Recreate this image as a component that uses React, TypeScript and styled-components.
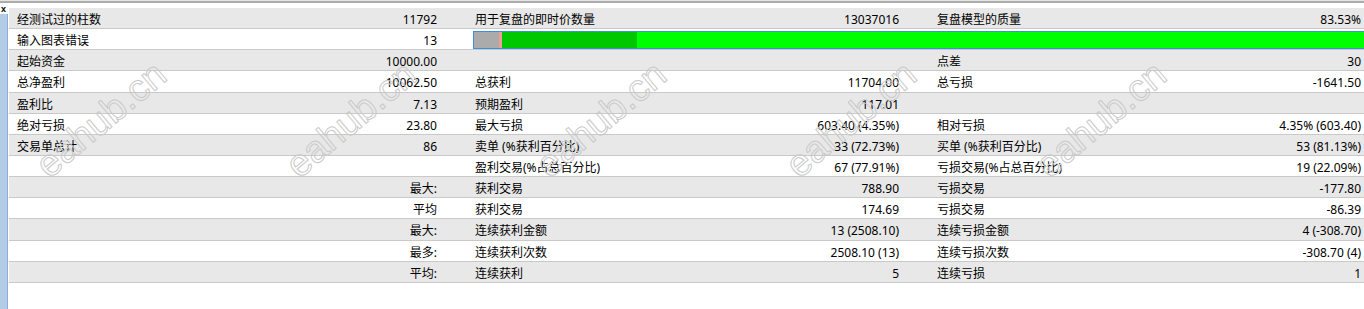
import styled, { createGlobalStyle } from "styled-components";

const GlobalStyle = createGlobalStyle`
  html, body {
    margin: 0;
    padding: 0;
    background: #ffffff;
    overflow: hidden;
  }
  body {
    font-family: "Noto Sans", "Noto Sans CJK SC", sans-serif;
    color: #000000;
  }
`;

type Row = {
  cells: string[];
  bar?: boolean;
};

const rows: Row[] = [
  { cells: ["经测试过的柱数", "11792", "用于复盘的即时价数量", "13037016", "复盘模型的质量", "83.53%"] },
  { cells: ["输入图表错误", "13"], bar: true },
  { cells: ["起始资金", "10000.00", "", "", "点差", "30"] },
  { cells: ["总净盈利", "10062.50", "总获利", "11704.00", "总亏损", "-1641.50"] },
  { cells: ["盈利比", "7.13", "预期盈利", "117.01", "", ""] },
  { cells: ["绝对亏损", "23.80", "最大亏损", "603.40 (4.35%)", "相对亏损", "4.35% (603.40)"] },
  { cells: ["交易单总计", "86", "卖单 (%获利百分比)", "33 (72.73%)", "买单 (%获利百分比)", "53 (81.13%)"] },
  { cells: ["", "", "盈利交易(%占总百分比)", "67 (77.91%)", "亏损交易(%占总百分比)", "19 (22.09%)"] },
  { cells: ["", "最大:", "获利交易", "788.90", "亏损交易", "-177.80"] },
  { cells: ["", "平均", "获利交易", "174.69", "亏损交易", "-86.39"] },
  { cells: ["", "最大:", "连续获利金额", "13 (2508.10)", "连续亏损金额", "4 (-308.70)"] },
  { cells: ["", "最多:", "连续获利次数", "2508.10 (13)", "连续亏损次数", "-308.70 (4)"] },
  { cells: ["", "平均:", "连续获利", "5", "连续亏损", "1"] },
];

// quality bar: gray / pink / dark green, then bright green fills the rest
const segments = [
  { w: "25px", c: "#ababab" },
  { w: "3px", c: "#f29b9b" },
  { w: "135px", c: "#00c800" },
];

const watermarks = [53, 303, 553, 803, 1053];

export default function App() {
  return (
    <Page>
      <GlobalStyle />
      <TopRule />
      <Body>
        <Side>
          <CloseMark>x</CloseMark>
          <Strip />
        </Side>
        <Table>
          {rows.map((row, i) => (
            <TableRow key={i} $shade={i % 2 === 0}>
              {row.bar ? (
                <>
                  <Label $first>{row.cells[0]}</Label>
                  <Value>{row.cells[1]}</Value>
                  <Bar>
                    {segments.map((s, j) => (
                      <Seg key={j} $w={s.w} $c={s.c} />
                    ))}
                    <Seg $w="auto" $c="#00ff00" $grow />
                  </Bar>
                </>
              ) : (
                row.cells.map((text, j) =>
                  j % 2 === 0 ? (
                    <Label key={j} $first={j === 0}>
                      {text}
                    </Label>
                  ) : (
                    <Value key={j}>{text}</Value>
                  )
                )
              )}
            </TableRow>
          ))}
        </Table>
      </Body>
      {watermarks.map((x) => (
        <Watermark key={x} $x={x}>
          eahub.cn
        </Watermark>
      ))}
    </Page>
  );
}

const Page = styled.div`
  position: relative;
  width: 1364px;
  height: 309px;
  overflow: hidden;
  display: flex;
  flex-direction: column;
`;

const TopRule = styled.div`
  height: 3px;
  box-sizing: border-box;
  background: #e4e4e4;
  border-bottom: 2px solid #acacac;
`;

const Body = styled.div`
  display: flex;
  flex: 1;
`;

const Side = styled.div`
  width: 9px;
  flex-shrink: 0;
  display: flex;
  flex-direction: column;
`;

const CloseMark = styled.div`
  height: 11px;
  padding-left: 1px;
  font: bold 9px "Liberation Sans", sans-serif;
  line-height: 13px;
  color: #000000;
`;

const Strip = styled.div`
  flex: 1;
  width: 7px;
  background: #b3cbe6;
  border-right: 1px solid #8eaed2;
`;

const Table = styled.div`
  margin-top: 5px;
  width: 1386px;
  display: flex;
  flex-direction: column;
`;

const TableRow = styled.div<{ $shade: boolean }>`
  display: grid;
  grid-template-columns: 200px 262px 200px 262px 200px 262px;
  height: 21.15px;
  box-sizing: border-box;
  border-bottom: 1px solid #c9c9c9;
  background: ${(p) => (p.$shade ? "#e8e8e8" : "#ffffff")};
`;

const Label = styled.div<{ $first?: boolean }>`
  padding-left: ${(p) => (p.$first ? 8 : 4)}px;
  padding-top: 3px;
  font-size: 12px;
  line-height: 17px;
  white-space: nowrap;
  overflow: hidden;
`;

const Value = styled.div`
  padding-right: 34px;
  padding-top: 3px;
  text-align: right;
  font-size: 12px;
  line-height: 17px;
  white-space: nowrap;
`;

const Bar = styled.div`
  grid-column: 3 / 7;
  margin: 2px 0 0 2px;
  height: 18px;
  box-sizing: border-box;
  border: 1px solid #3d8fe0;
  display: flex;
`;

const Seg = styled.div<{ $w: string; $c: string; $grow?: boolean }>`
  width: ${(p) => p.$w};
  flex: ${(p) => (p.$grow ? 1 : "none")};
  background: ${(p) => p.$c};
`;

const Watermark = styled.span<{ $x: number }>`
  position: absolute;
  left: ${(p) => p.$x}px;
  top: 146px;
  font: 38px "Liberation Sans", sans-serif;
  line-height: 38px;
  color: transparent;
  -webkit-text-stroke: 1px #cacaca;
  transform: rotate(-40deg);
  transform-origin: 0 100%;
  white-space: nowrap;
  pointer-events: none;
`;
